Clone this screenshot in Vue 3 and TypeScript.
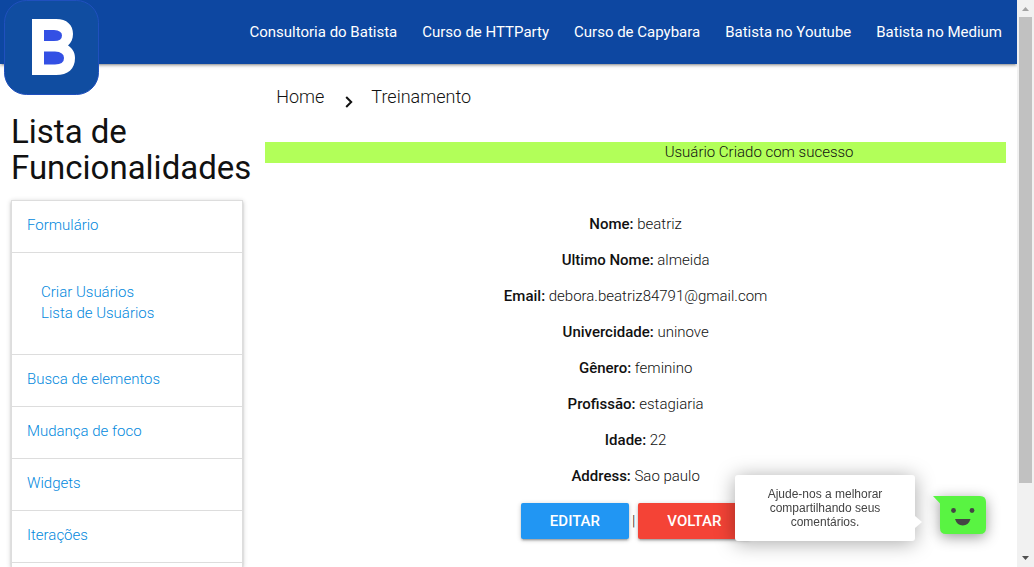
<script setup lang="ts">
interface MenuItem {
  label: string
  children?: string[]
}

interface Field {
  label: string
  value: string
}

const navLinks: string[] = [
  'Consultoria do Batista',
  'Curso de HTTParty',
  'Curso de Capybara',
  'Batista no Youtube',
  'Batista no Medium',
]

const menu: MenuItem[] = [
  { label: 'Formulário', children: ['Criar Usuários', 'Lista de Usuários'] },
  { label: 'Busca de elementos' },
  { label: 'Mudança de foco' },
  { label: 'Widgets' },
  { label: 'Iterações' },
]

const fields: Field[] = [
  { label: 'Nome:', value: 'beatriz' },
  { label: 'Ultimo Nome:', value: 'almeida' },
  { label: 'Email:', value: 'debora.beatriz84791@gmail.com' },
  { label: 'Univercidade:', value: 'uninove' },
  { label: 'Gênero:', value: 'feminino' },
  { label: 'Profissão:', value: 'estagiaria' },
  { label: 'Idade:', value: '22' },
  { label: 'Address:', value: 'Sao paulo' },
]
</script>

<template>
  <div class="page">
    <header class="navbar">
      <a href="#" class="logo" aria-label="Batista">
        <svg viewBox="0 0 95 95" width="95" height="95" aria-hidden="true">
          <rect x="0.5" y="0.5" width="94" height="94" rx="22" fill="#104da1" stroke="#2050be" />
          <path
            fill="#fff"
            d="M28 19H52C63 19 69 25 69 34C69 39 67 43 64 45.500C68 48 71 52 71 58C71 69 64 75 52 75H28Z"
          />
          <path fill="#3350e4" d="M40 30H50Q58 30.500 58 35.500Q58 41 50 41H40Z" />
          <path fill="#3350e4" d="M40 51.500H51Q60 52 60 58Q60 64.500 51 64.500H40Z" />
        </svg>
      </a>
      <nav>
        <ul class="nav-links">
          <li v-for="link in navLinks" :key="link"><a href="#">{{ link }}</a></li>
        </ul>
      </nav>
    </header>

    <div class="columns">
      <aside class="sidebar">
        <h1>Lista de Funcionalidades</h1>
        <ul class="menu">
          <li v-for="item in menu" :key="item.label">
            <a href="#" class="menu-header">{{ item.label }}</a>
            <div v-if="item.children" class="menu-body">
              <a v-for="child in item.children" :key="child" href="#">{{ child }}</a>
            </div>
          </li>
        </ul>
      </aside>

      <main class="content">
        <nav class="breadcrumb">
          <a href="#">Home</a>
          <svg viewBox="0 0 8 12" width="8" height="12" aria-hidden="true">
            <path d="M1.200 1L6.200 6L1.200 11" fill="none" stroke="#111" stroke-width="2" />
          </svg>
          <a href="#">Treinamento</a>
        </nav>

        <p class="notice">Usuário Criado com sucesso</p>

        <div class="details">
          <p v-for="field in fields" :key="field.label">
            <strong>{{ field.label }}</strong> {{ field.value }}
          </p>
        </div>

        <div class="actions">
          <button type="button" class="btn edit">EDITAR</button>
          <span>|</span>
          <button type="button" class="btn back">VOLTAR</button>
        </div>
      </main>
    </div>

    <div class="feedback">
      <div class="bubble">Ajude-nos a melhorar compartilhando seus comentários.</div>
      <button type="button" class="smile" aria-label="Comentários">
        <svg viewBox="0 0 53 38" width="53" height="38" aria-hidden="true">
          <path
            fill="#59f442"
            d="M0 0H47Q53 0 53 6V32Q53 38 47 38H13Q7 38 7 32V7.500Z"
          />
          <circle cx="20.500" cy="14.500" r="2.400" fill="#444" />
          <circle cx="39" cy="14.500" r="2.400" fill="#444" />
          <path fill="#444" d="M22 23H37.500Q35.500 29.500 29.750 29.500Q24 29.500 22 23Z" />
        </svg>
      </button>
    </div>

    <div class="scrollbar" aria-hidden="true">
      <svg viewBox="0 0 17 17" width="17" height="17"><path d="M5 11H12L8.500 7Z" fill="#a3a3a3" /></svg>
      <div class="track"><div class="thumb"></div></div>
      <svg viewBox="0 0 17 17" width="17" height="17"><path d="M5 6H12L8.500 10Z" fill="#505050" /></svg>
    </div>
  </div>
</template>

<style>
body {
  margin: 0;
  background: #fff;
}
</style>

<style scoped>
.page {
  display: flex;
  flex-direction: column;
  min-height: 100vh;
  padding-right: 17px;
  box-sizing: border-box;
  font-family: Roboto, "Liberation Sans", sans-serif;
  font-size: 15px;
  font-weight: 300;
  line-height: 21px;
  color: #111;
}

a {
  color: #0288dd;
  text-decoration: none;
}

ul {
  list-style: none;
  margin: 0;
  padding: 0;
}

.navbar {
  display: flex;
  justify-content: space-between;
  height: 64px;
  padding: 0 15px 0 4px;
  background: #0d47a1;
  box-shadow: 0 2px 2px 0 rgba(0, 0, 0, 0.14), 0 3px 1px -2px rgba(0, 0, 0, 0.12),
    0 1px 5px 0 rgba(0, 0, 0, 0.2);
}

.logo svg {
  display: block;
}

.nav-links {
  display: flex;
  gap: 25px;
}

.nav-links a {
  display: block;
  line-height: 64px;
  font-weight: 400;
  color: #fff;
  white-space: nowrap;
}

.columns {
  flex: 1;
  display: grid;
  grid-template-columns: 1fr 3fr;
}

.sidebar {
  display: flex;
  flex-direction: column;
  min-width: 0;
  padding: 50px 11px 0;
}

h1 {
  margin: 0 0 14px;
  font-size: 33px;
  font-weight: 400;
  line-height: 36px;
}

.menu {
  flex: 1;
  border: 1px solid #ddd;
  border-bottom: 0;
  box-shadow: 0 2px 2px 0 rgba(0, 0, 0, 0.14), 0 3px 1px -2px rgba(0, 0, 0, 0.12),
    0 1px 5px 0 rgba(0, 0, 0, 0.2);
}

.menu a {
  display: block;
}

.menu .menu-header {
  padding: 14px 15px 16px;
  border-bottom: 1px solid #ddd;
}

.menu-body {
  padding: 29px 29px 30px;
  border-bottom: 1px solid #ddd;
}

.content {
  min-width: 0;
  padding: 0 11px;
}

.breadcrumb {
  display: flex;
  align-items: center;
  height: 64px;
  padding-left: 11px;
  font-size: 18px;
}

.breadcrumb a {
  color: #111;
}

.breadcrumb svg {
  margin: 12px 18px 0 21px;
}

.notice {
  margin: 14px 0 0;
  padding-left: 33.333%;
  background: #b2ff59;
  text-align: center;
}

.details {
  display: flex;
  flex-direction: column;
  gap: 15px;
  padding-top: 51px;
  text-align: center;
}

.details p {
  margin: 0;
}

strong {
  font-weight: 500;
}

.actions {
  display: flex;
  justify-content: center;
  align-items: center;
  gap: 3px;
  padding-top: 16px;
}

.btn {
  height: 36px;
  padding: 0 29px;
  border: 0;
  border-radius: 2px;
  font: inherit;
  font-weight: 500;
  color: #fff;
  box-shadow: 0 2px 2px 0 rgba(0, 0, 0, 0.14), 0 3px 1px -2px rgba(0, 0, 0, 0.12),
    0 1px 5px 0 rgba(0, 0, 0, 0.2);
}

.edit {
  background: #2196f3;
}

.back {
  background: #f44336;
}

.feedback {
  position: fixed;
  right: 48px;
  bottom: 26px;
  display: flex;
  align-items: center;
  gap: 18px;
}

.bubble {
  position: relative;
  box-sizing: border-box;
  width: 180px;
  padding: 12px 30px;
  border-radius: 3px;
  background: #fff;
  box-shadow: 0 2px 20px rgba(0, 0, 0, 0.35);
  font-family: "Liberation Sans", Arial, sans-serif;
  font-size: 12px;
  font-weight: 400;
  line-height: 14px;
  text-align: center;
  color: #444;
}

.bubble::after {
  content: "";
  position: absolute;
  left: 100%;
  bottom: 13px;
  border: 6px solid transparent;
  border-left: 7px solid #fff;
  border-right: 0;
}

.smile {
  padding: 0;
  border: 0;
  background: none;
}

.smile svg {
  display: block;
  margin-top: 14px;
  filter: drop-shadow(0 3px 7px rgba(0, 0, 0, 0.4));
}

.scrollbar {
  position: fixed;
  top: 0;
  right: 0;
  bottom: 0;
  display: flex;
  flex-direction: column;
  width: 17px;
  background: #f1f1f1;
}

.track {
  flex: 1;
  padding: 0 2px;
}

.thumb {
  height: 87.4%;
  background: #c1c1c1;
}
</style>
